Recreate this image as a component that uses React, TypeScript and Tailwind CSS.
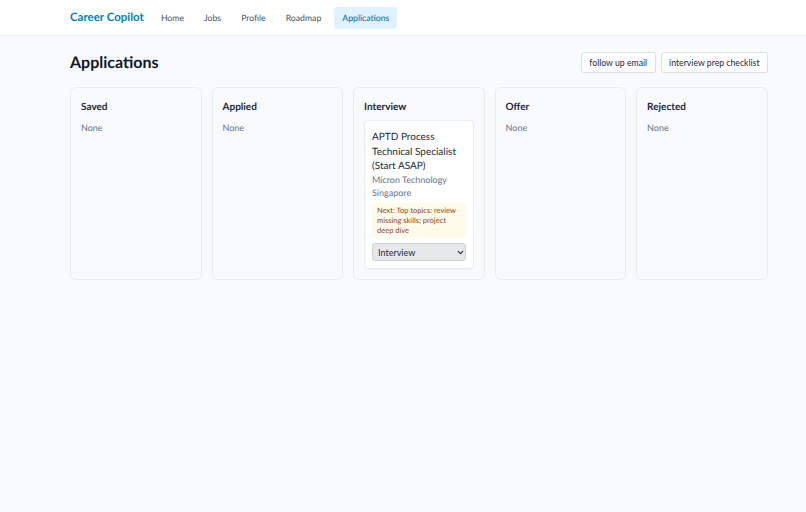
import { ChevronDown } from 'lucide-react';

const links = ['Home', 'Jobs', 'Profile', 'Roadmap', 'Applications'];

const columns = ['Saved', 'Applied', 'Interview', 'Offer', 'Rejected'];

function JobCard() {
  return (
    <div className="bg-white border border-[#e8edf3] rounded-[4px] px-[7px] pt-[9px] pb-[7px] shadow-[0_1px_2px_rgba(0,0,0,0.04)]">
      <div className="text-[10px] leading-[14.7px] text-[#1e293b]">APTD Process<br />Technical Specialist<br />(Start ASAP)</div>
      <div className="text-[9px] leading-[12.5px] text-[#64748b]">Micron Technology</div>
      <div className="text-[9px] leading-[12.5px] text-[#64748b]">Singapore</div>
      <div className="bg-[#fffbeb] text-[#92400e] text-[7.5px] leading-[10px] rounded-[3px] mt-[4px] px-[5px] py-[2.5px]">
        Next: Top topics: review missing skills; project deep dive
      </div>
      <div className="relative mt-[5px]">
        <select defaultValue="Interview" className="appearance-none block w-full h-[18px] pl-[5px] pt-px text-[9px] text-[#1e293b] bg-[#e5e7eb] border border-[#cbd5e1] rounded-[3px]">
          {columns.map(c => (
            <option key={c} value={c}>{c}</option>
          ))}
        </select>
        <ChevronDown size={9} strokeWidth={3} className="absolute right-[1px] top-[5px] text-[#1e293b]" />
      </div>
    </div>
  );
}

export default function App() {
  return (
    <div className="min-h-[512px] bg-[#f8fafc] font-['Lato','Noto_Sans',sans-serif] [text-rendering:geometricPrecision]">
      <nav className="h-[36px] bg-white border-b border-[#e8edf3] flex items-center pl-[70px]">
        <span className="text-[11.5px] font-bold text-[#0380bd] mr-[9px]">Career Copilot</span>
        {links.map(link => (
          <a
            key={link}
            className={link === 'Applications'
              ? 'text-[8.7px] px-[8px] pt-px h-[22px] flex items-center rounded-[4px] bg-[#e0f2fe] text-[#0369a1] ml-[1px]'
              : 'text-[8.7px] px-[8px] pt-px h-[22px] flex items-center rounded-[4px] text-[#475569] mr-[4px]'}
          >
            {link}
          </a>
        ))}
      </nav>
      <main className="pl-[70px] pr-[38px] pt-[15px]">
        <div className="flex items-center justify-between h-[22px] mb-[14px]">
          <h1 className="text-[16px] font-bold text-[#0f172a] pt-px">Applications</h1>
          <div className="flex gap-[5px]">
            <button className="text-[8.7px] text-[#1e293b] bg-white border border-[#dbe1e8] rounded-[3px] px-[7.5px] pt-px h-[21px]">follow up email</button>
            <button className="text-[8.7px] text-[#1e293b] bg-white border border-[#dbe1e8] rounded-[3px] px-[7.5px] pt-px h-[21px]">interview prep checklist</button>
          </div>
        </div>
        <div className="grid grid-cols-5 gap-[9.6px]">
          {columns.map(col => (
            <section key={col} className="h-[193px] border border-[#e8edf3] rounded-[6px] px-[10px] pt-[12px]">
              <h2 className="text-[10px] leading-[15px] font-bold text-[#1e293b] mb-[5px]">{col}</h2>
              {col === 'Interview' ? <JobCard /> : <p className="text-[9px] text-[#64748b] pt-px">None</p>}
            </section>
          ))}
        </div>
      </main>
    </div>
  );
}
